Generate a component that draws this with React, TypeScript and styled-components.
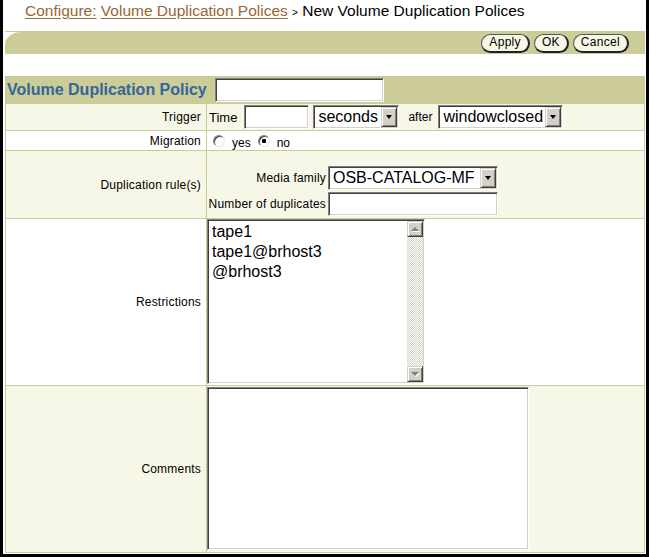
import React from 'react'
import styled, { createGlobalStyle } from 'styled-components'

const GlobalStyle = createGlobalStyle`
  html, body {
    margin: 0;
    padding: 0;
    background: #fff;
  }
  body {
    font-family: "Liberation Sans", Arial, sans-serif;
    color: #000;
  }
`

const App = () => {
  return (
    <>
      <GlobalStyle />
      <Frame>
        <Crumbs>
          <a>Configure:</a> <a>Volume Duplication Polices</a> <Sep>&gt;</Sep> New Volume Duplication Polices
        </Crumbs>

        <TitleLine>
          <TitleBar>
            <PillButton>Apply</PillButton>
            <PillButton>OK</PillButton>
            <PillButton>Cancel</PillButton>
          </TitleBar>
        </TitleLine>

        <Form>
          <Header>
            <HeaderTitle>Volume Duplication Policy</HeaderTitle>
            <TextInput $w={169} $h={24} />
          </Header>

          <Label $tone="beige">Trigger</Label>
          <Value $tone="beige">
            <InlineText $size={13} style={{ marginLeft: 2 }}>Time</InlineText>
            <TextInput $w={65} $h={24} style={{ marginLeft: 7 }} />
            <Select $w={86} style={{ marginLeft: 4 }}>
              <SelectText>seconds</SelectText>
              <DropButton><Arrow /></DropButton>
            </Select>
            <InlineText $size={12} style={{ marginLeft: 9 }}>after</InlineText>
            <Select $w={125} style={{ marginLeft: 6 }}>
              <SelectText>windowclosed</SelectText>
              <DropButton><Arrow /></DropButton>
            </Select>
          </Value>

          <Label $tone="white">Migration</Label>
          <Value $tone="white">
            <RadioGroup>
              <Radio />
              <RadioText>yes</RadioText>
              <Radio $on />
              <RadioText>no</RadioText>
            </RadioGroup>
          </Value>

          <Label $tone="beige">Duplication rule(s)</Label>
          <Value $tone="beige" $top>
            <RuleGrid>
              <RuleLabel>Media family</RuleLabel>
              <Select $w={170}>
                <SelectText>OSB-CATALOG-MF</SelectText>
                <DropButton><Arrow /></DropButton>
              </Select>
              <RuleLabel>Number of duplicates</RuleLabel>
              <TextInput $w={170} $h={24} />
            </RuleGrid>
          </Value>

          <Label $tone="white">Restrictions</Label>
          <Value $tone="white" $top>
            <ListBox>
              <ListItems>
                <div>tape1</div>
                <div>tape1@brhost3</div>
                <div>@brhost3</div>
              </ListItems>
              <ScrollBar>
                <ScrollButton><GrayArrow $up /></ScrollButton>
                <ScrollTrack />
                <ScrollButton><GrayArrow /></ScrollButton>
              </ScrollBar>
            </ListBox>
          </Value>

          <Label $tone="beige">Comments</Label>
          <Value $tone="beige" $top>
            <TextArea />
          </Value>
        </Form>
      </Frame>
    </>
  )
}

const inset = `
  box-sizing: border-box;
  border: 1px solid;
  border-color: #808080 #fff #fff #808080;
  box-shadow: inset 1px 1px #404040, inset -1px -1px #d4d0c8;
  background: #fff;
`

const raised = `
  box-sizing: border-box;
  background: #d4d0c8;
  border: 1px solid;
  border-color: #d4d0c8 #404040 #404040 #d4d0c8;
  box-shadow: inset 1px 1px #fff, inset -1px -1px #808080;
`

const Frame = styled.div`
  width: 649px;
  height: 557px;
  box-sizing: border-box;
  border-left: 3px solid #000;
  border-right: 3px solid #000;
  border-bottom: 3px solid #000;
  padding: 0 1px 0 2px;
  background: #fff;
  overflow: hidden;
`

const Crumbs = styled.div`
  height: 31px;
  box-sizing: border-box;
  padding: 1px 0 0 20px;
  font-size: 15.5px;
  line-height: 20px;
  white-space: nowrap;
  a {
    color: #996633;
    text-decoration: underline;
    text-underline-offset: 2px;
  }
`

const Sep = styled.span`
  font-size: 10px;
`

const TitleLine = styled.div`
  border-top: 1px solid #cccc99;
`

const TitleBar = styled.div`
  height: 22px;
  background: #cccc99;
  border-top-left-radius: 16px 13px;
  display: flex;
  justify-content: flex-end;
  align-items: center;
  gap: 4px;
  padding-right: 16px;
`

const PillButton = styled.button`
  height: 19px;
  box-sizing: border-box;
  padding: 0 7px;
  border-style: solid;
  border-width: 1px 2px 2px 1px;
  border-color: #555 #222 #222 #555;
  border-radius: 10px;
  background: #f7f7e7;
  font-family: "Liberation Sans", Arial, sans-serif;
  font-size: 12px;
  letter-spacing: 0.3px;
  line-height: 15px;
  color: #000;
`

const Form = styled.div`
  margin-top: 22px;
  display: grid;
  grid-template-columns: 200px 437px;
  grid-template-rows: 26px 26px 19px 67px 166px 166px;
  gap: 1px;
  padding: 1px;
  background: #cccc99;
`

const Header = styled.div`
  grid-column: 1 / -1;
  background: #cccc99;
  display: flex;
  align-items: center;
  gap: 8px;
  padding-left: 1px;
`

const HeaderTitle = styled.span`
  font-size: 16px;
  font-weight: bold;
  color: #336699;
  white-space: nowrap;
`

const Label = styled.div<{ $tone: 'beige' | 'white' }>`
  background: ${p => (p.$tone === 'beige' ? '#f7f7e7' : '#fff')};
  display: flex;
  align-items: center;
  justify-content: flex-end;
  padding-right: 5px;
  font-size: 12px;
  letter-spacing: 0.2px;
  white-space: nowrap;
`

const Value = styled.div<{ $tone: 'beige' | 'white'; $top?: boolean }>`
  background: ${p => (p.$tone === 'beige' ? '#f7f7e7' : '#fff')};
  display: flex;
  align-items: ${p => (p.$top ? 'flex-start' : 'center')};
`

const InlineText = styled.span<{ $size: number }>`
  font-size: ${p => p.$size}px;
  white-space: nowrap;
`

const TextInput = styled.input<{ $w: number; $h: number }>`
  ${inset}
  width: ${p => p.$w}px;
  height: ${p => p.$h}px;
  margin: 0;
  padding: 0 3px;
  font-family: "Liberation Sans", Arial, sans-serif;
  font-size: 16px;
  outline: none;
`

const Select = styled.div<{ $w: number }>`
  ${inset}
  width: ${p => p.$w}px;
  height: 24px;
  padding: 1px;
  display: flex;
  align-items: stretch;
`

const SelectText = styled.span`
  flex: 1;
  padding-left: 3px;
  font-size: 16px;
  line-height: 20px;
  white-space: nowrap;
  overflow: hidden;
`

const DropButton = styled.span`
  ${raised}
  width: 16px;
  display: flex;
  align-items: center;
  justify-content: center;
`

const Arrow = styled.span`
  width: 0;
  height: 0;
  border-left: 3.5px solid transparent;
  border-right: 3.5px solid transparent;
  border-top: 4px solid #000;
`

const GrayArrow = styled.span<{ $up?: boolean }>`
  width: 0;
  height: 0;
  border-left: 4px solid transparent;
  border-right: 4px solid transparent;
  ${p => (p.$up ? 'border-bottom: 4px solid #808080;' : 'border-top: 4px solid #808080;')}
  filter: drop-shadow(1px 1px 0 #fff);
`

const RadioGroup = styled.div`
  display: flex;
  align-items: center;
  gap: 7px;
  padding-left: 6px;
`

const Radio = styled.span<{ $on?: boolean }>`
  width: 12px;
  height: 12px;
  box-sizing: border-box;
  border-radius: 50%;
  border: 1px solid;
  border-color: #808080 #e8e8e8 #e8e8e8 #808080;
  box-shadow: inset 1px 1px #404040;
  background: ${p => (p.$on ? 'radial-gradient(circle, #000 0 2px, #fff 2.5px)' : '#fff')};
`

const RadioText = styled.span`
  font-size: 12px;
  padding-top: 4px;
`

const RuleGrid = styled.div`
  display: grid;
  grid-template-columns: 119px 170px;
  column-gap: 2px;
  row-gap: 2px;
  align-items: center;
  padding-top: 15px;
`

const RuleLabel = styled.span`
  font-size: 12px;
  letter-spacing: 0.2px;
  text-align: right;
  white-space: nowrap;
`

const ListBox = styled.div`
  ${inset}
  width: 218px;
  height: 165px;
  padding: 1px;
  display: flex;
`

const ListItems = styled.div`
  flex: 1;
  padding: 1px 0 0 3px;
  font-size: 16px;
  line-height: 20px;
`

const ScrollBar = styled.div`
  width: 16px;
  display: flex;
  flex-direction: column;
`

const ScrollButton = styled.span`
  ${raised}
  height: 16px;
  display: flex;
  align-items: center;
  justify-content: center;
`

const ScrollTrack = styled.div`
  flex: 1;
  background: repeating-conic-gradient(#d4d0c8 0 25%, #fff 0 50%) 0 0 / 2px 2px;
`

const TextArea = styled.textarea`
  ${inset}
  width: 322px;
  height: 163px;
  margin: 1px 0 0;
  padding: 2px;
  resize: none;
  outline: none;
  overflow: hidden;
  font-family: "Liberation Sans", Arial, sans-serif;
  font-size: 16px;
`

export default App
